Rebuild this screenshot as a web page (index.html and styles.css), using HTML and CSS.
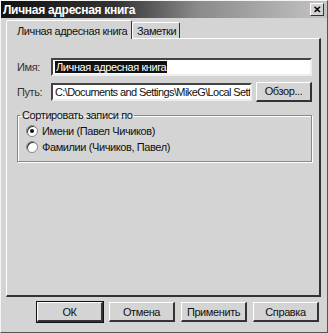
FILE: index.html
```html
<!DOCTYPE html>
<html lang="ru">
<head>
    <meta charset="UTF-8">
    <title>Личная адресная книга</title>
    <link rel="stylesheet" href="styles.css">
</head>
<body>
    <div class="window">
        <div class="titlebar">
            <span class="title">Личная адресная книга</span>
            <span class="close">&#x2715;</span>
        </div>

        <div class="tabs">
            <div class="tab active">Личная адресная книга</div>
            <div class="tab">Заметки</div>
        </div>

        <div class="panel">
            <div class="row">
                <label class="label">Имя:</label>
                <div class="input"><span class="selected">Личная адресная книга</span></div>
            </div>
            <div class="row">
                <label class="label">Путь:</label>
                <div class="input path">C:\Documents and Settings\MikeG\Local Setti</div>
                <button class="btn browse">Обзор...</button>
            </div>

            <fieldset class="group">
                <legend>Сортировать записи по</legend>
                <div class="radio-row"><span class="radio checked"></span>Имени (Павел Чичиков)</div>
                <div class="radio-row"><span class="radio"></span>Фамилии (Чичиков, Павел)</div>
            </fieldset>
        </div>

        <div class="buttons">
            <button class="btn default">ОК</button>
            <button class="btn">Отмена</button>
            <button class="btn">Применить</button>
            <button class="btn">Справка</button>
        </div>
    </div>
</body>
</html>
```

FILE: styles.css
```css
* {
    margin: 0;
    padding: 0;
    box-sizing: border-box;
}

body {
    font-family: 'Liberation Sans', Arial, sans-serif;
    font-size: 11px;
    letter-spacing: -0.4px;
    color: #111;
    background: #d2d2d2;
}

.window {
    width: 328px;
    height: 333px;
    background: #d4d4d4;
    border: 1px solid #f4f4f4;
    border-right-color: #555;
    border-bottom-color: #555;
}

.titlebar {
    height: 17px;
    background: linear-gradient(to right, #111 0%, #333 35%, #8a8a8a 60%, #c4c4c4 100%);
    display: flex;
    align-items: center;
    justify-content: space-between;
    padding: 0 2px;
}

.title {
    color: #fff;
    font-weight: bold;
    font-size: 12px;
    letter-spacing: -0.3px;
}

.close {
    width: 14px;
    height: 13px;
    background: #d4d4d4;
    border: 1px solid #fff;
    border-right-color: #333;
    border-bottom-color: #333;
    font-size: 10px;
    font-weight: bold;
    line-height: 11px;
    text-align: center;
    color: #000;
    margin-right: 1px;
    letter-spacing: 0;
}

.tabs {
    display: flex;
    align-items: flex-end;
    padding: 0 0 0 5px;
    height: 20px;
}

.tab {
    height: 16px;
    padding: 1px 3px 0 4px;
    border: 1px solid #fff;
    border-bottom: none;
    border-right-color: #333;
    border-radius: 2px 2px 0 0;
    background: #d4d4d4;
    line-height: 14px;
    white-space: nowrap;
}

.tab.active {
    height: 19px;
    padding-top: 3px;
    padding-left: 10px;
    width: 126px;
    position: relative;
    z-index: 1;
    margin-bottom: -1px;
}

.panel {
    margin: 0 6px 0 5px;
    height: 259px;
    border: 1px solid #fff;
    border-right: 2px solid #333;
    border-bottom: 2px solid #333;
    padding: 18px 7px 0 10px;
}

.row {
    display: flex;
    align-items: center;
    margin-bottom: 6px;
    height: 19px;
}

.label {
    width: 34px;
    color: #333;
}

.input {
    flex: 1;
    height: 18px;
    background: #fff;
    border: 2px solid #444;
    border-right-color: #eee;
    border-bottom-color: #eee;
    padding: 0 2px;
    line-height: 14px;
    white-space: nowrap;
    overflow: hidden;
}

.selected {
    background: #111;
    color: #fff;
    padding: 0 1px;
}

.path {
    margin-right: 4px;
    letter-spacing: -0.6px;
}

.btn {
    font-family: 'Liberation Sans', Arial, sans-serif;
    font-size: 11px;
    letter-spacing: -0.4px;
    background: #d4d4d4;
    color: #111;
    border: 1px solid #fff;
    border-right: 2px solid #333;
    border-bottom: 2px solid #333;
    height: 20px;
}

.browse {
    width: 56px;
}

.group {
    border: 1px solid #888;
    box-shadow: 1px 1px 0 #fff, inset 1px 1px 0 #fff;
    margin-top: 8px;
    height: 53px;
    padding: 2px 0 0 8px;
}

.group legend {
    padding: 0 2px;
    margin-left: -6px;
    line-height: 12px;
}

.radio-row {
    display: flex;
    align-items: center;
    height: 16px;
}

.radio {
    width: 12px;
    height: 12px;
    border-radius: 50%;
    background: #fff;
    border: 1px solid #888;
    box-shadow: inset 1px 1px 0 #333;
    margin-right: 4px;
    position: relative;
}

.radio.checked::after {
    content: "";
    position: absolute;
    left: 3px;
    top: 3px;
    width: 4px;
    height: 4px;
    border-radius: 50%;
    background: #111;
}

.buttons {
    display: flex;
    justify-content: flex-end;
    gap: 6px;
    padding: 5px 8px 0 0;
}

.buttons .btn {
    width: 66px;
    height: 20px;
}

.buttons .default {
    outline: 1px solid #111;
}
```
